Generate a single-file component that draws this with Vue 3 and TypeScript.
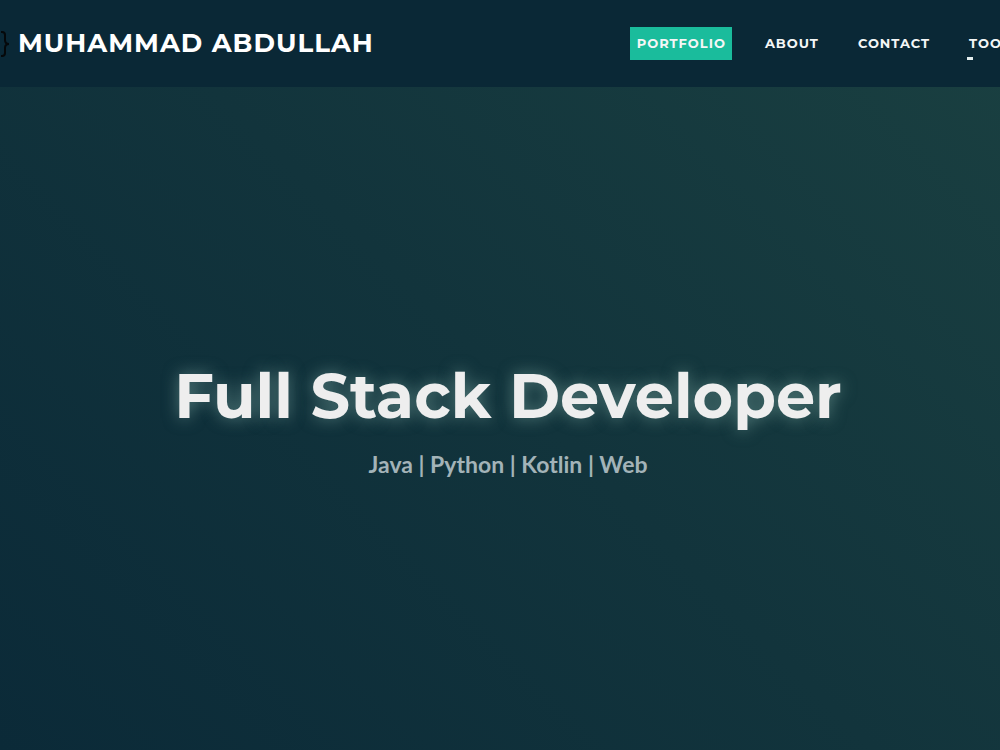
<script setup lang="ts">
interface NavLink {
  label: string
  href: string
  state?: 'active' | 'entering'
}

const links: NavLink[] = [
  { label: 'PORTFOLIO', href: '#portfolio', state: 'active' },
  { label: 'ABOUT', href: '#about' },
  { label: 'CONTACT', href: '#contact' },
  { label: 'TOOLS', href: '#tools', state: 'entering' },
]
const skills: string[] = ['Java', 'Python', 'Kotlin', 'Web']
</script>

<template>
  <div class="page">
    <header class="bar">
      <a class="brand" href="#top">
        <svg class="braces" viewBox="0 0 28 28" aria-hidden="true">
          <path d="M9 2H8Q5 2 5 5V10Q5 14 1 14Q5 14 5 18V23Q5 26 8 26H9" />
          <path d="M19 2H20Q23 2 23 5V10Q23 14 27 14Q23 14 23 18V23Q23 26 20 26H19" />
        </svg>
        <span>MUHAMMAD ABDULLAH</span>
      </a>
      <nav class="nav" aria-label="Main">
        <a
          v-for="link in links"
          :key="link.label"
          class="link"
          :class="link.state"
          :href="link.href"
        >{{ link.label }}</a>
      </nav>
    </header>
    <main class="hero">
      <h1>Full Stack Developer</h1>
      <p>{{ skills.join(' | ') }}</p>
    </main>
  </div>
</template>

<style>
body {
  margin: 0;
  background: #0a2836;
}
</style>

<style scoped>
.page {
  display: flex;
  flex-direction: column;
  min-height: 100vh;
  overflow: hidden;
  background: linear-gradient(45deg, #0b2a38, #12343c 50%, #1a4041);
  font-family: Montserrat, Inter, "Liberation Sans", sans-serif;
}
.bar {
  display: flex;
  align-items: center;
  justify-content: space-between;
  box-sizing: border-box;
  min-height: 87px;
  background: #0a2836;
  letter-spacing: 1px;
}
.brand {
  display: flex;
  align-items: center;
  gap: 8px;
  margin-left: -18px;
  color: #fff;
  font-size: 26px;
  font-weight: 700;
  line-height: 35px;
  text-decoration: none;
  white-space: nowrap;
}
.braces {
  width: 28px;
  height: 28px;
  fill: none;
  stroke: #05080a;
  stroke-width: 2;
}
.nav {
  display: flex;
  gap: 25px;
  margin-right: -26px;
}
.link {
  position: relative;
  padding: 8px 6px 8px 7px;
  color: #f4f6f6;
  font-size: 13px;
  font-weight: 700;
  line-height: 17px;
  text-decoration: none;
  white-space: nowrap;
}
.link + .link {
  margin-left: 1px;
}
.active {
  background: #1abc9c;
}
.entering::after {
  content: "";
  position: absolute;
  left: 5px;
  bottom: 0;
  width: 6px;
  height: 3px;
  background: #e4eeee;
}
.hero {
  flex: 1;
  display: flex;
  flex-direction: column;
  align-items: center;
  justify-content: center;
  padding: 0 0 1px 16px;
  text-align: center;
}
h1 {
  margin: 0;
  color: #eee;
  font-size: 62px;
  font-weight: 700;
  line-height: 80px;
  text-shadow: 0 0 16px rgba(150, 195, 185, 0.5);
  white-space: nowrap;
}
p {
  margin: 12px 0 0;
  color: #a3b3b8;
  font-family: Lato, sans-serif;
  font-size: 23px;
  font-weight: 700;
  line-height: 32px;
}
</style>
